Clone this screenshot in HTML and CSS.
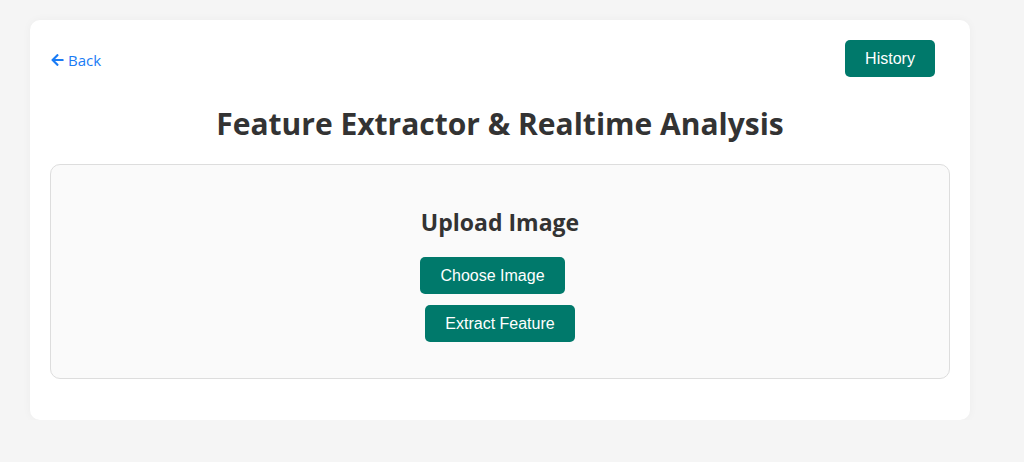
FILE: index.html
```html
<!DOCTYPE html>
<html>
<head>
<meta charset="utf-8">
<link rel="stylesheet" href="styles.css">
</head>
<body>
<div class="card">
  <div class="header">
    <a class="back" href="#"><svg class="arrow" viewBox="0 0 448 512" width="13" height="14"><path fill="currentColor" d="M257.5 445.1l-22.2 22.2c-9.4 9.4-24.6 9.4-33.9 0L7 273c-9.4-9.4-9.4-24.6 0-33.9L201.4 44.7c9.4-9.4 24.6-9.4 33.9 0l22.2 22.2c9.5 9.5 9.3 25-.4 34.3L136.6 216H424c13.3 0 24 10.7 24 24v32c0 13.3-10.7 24-24 24H136.6l120.5 114.8c9.8 9.3 10 24.8.4 34.3z"/></svg>Back</a>
    <button class="btn history">History</button>
  </div>
  <h1 class="title">Feature Extractor &amp; Realtime Analysis</h1>
  <div class="upload">
    <h3 class="upload-title">Upload Image</h3>
    <div class="actions">
      <button class="btn choose">Choose Image</button>
      <button class="btn extract">Extract Feature</button>
    </div>
  </div>
</div>
</body>
</html>
```
FILE: styles.css
```css
html, body {
  margin: 0;
  padding: 0;
}
body {
  background: #f5f5f5;
  font-family: "Open Sans", "Noto Sans", sans-serif;
  color: #333;
  padding: 20px 54px 0 30px;
}
.card {
  width: 940px;
  height: 400px;
  box-sizing: border-box;
  background: #fff;
  border-radius: 10px;
  box-shadow: 0 0 10px rgba(0,0,0,0.04);
  padding: 20px 20px 0 20px;
}
.header {
  display: flex;
  justify-content: space-between;
  align-items: center;
  padding-left: 1px;
  padding-right: 15px;
  height: 37px;
}
.back {
  color: #1a7cf5;
  text-decoration: none;
  font-size: 15px;
  display: flex;
  align-items: center;
  gap: 4px;
  margin-top: 3px;
}
.arrow {
  display: block;
}
.btn {
  background: #00796b;
  color: #fff;
  border: none;
  border-radius: 5px;
  font-family: "Liberation Sans", Arial, sans-serif;
  font-size: 16px;
  height: 37px;
  padding: 0 20px;
  cursor: pointer;
}
.history {
  width: 90px;
  padding: 0;
}
.title {
  text-align: center;
  font-size: 30px;
  line-height: 40px;
  font-weight: 700;
  margin: 27px 0 20px;
  color: #333;
}
.upload {
  background: #fafafa;
  border: 1px solid #ddd;
  border-radius: 10px;
  height: 215px;
  box-sizing: border-box;
  padding-top: 42px;
  text-align: center;
}
.upload-title {
  margin: 0 0 20px;
  font-size: 23px;
  line-height: 30px;
  font-weight: 700;
}
.actions {
  display: flex;
  flex-direction: column;
  align-items: center;
  gap: 11px;
}
.choose {
  width: 145px;
  padding: 0;
  margin-right: 15px;
}
.extract {
  width: 150px;
  padding: 0;
}
```
